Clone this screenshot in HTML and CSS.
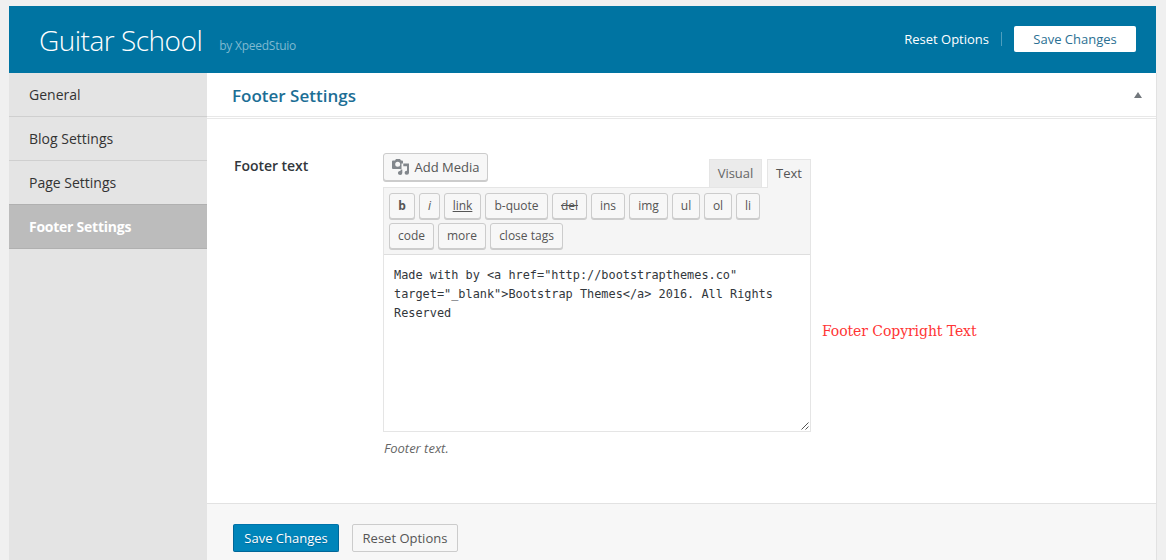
FILE: index.html
```html
<!DOCTYPE html>
<html lang="en">
<head>
<meta charset="utf-8">
<title>Guitar School</title>
<link rel="stylesheet" href="styles.css">
</head>
<body>
<div class="panel">
  <header class="header">
    <h1 class="title">Guitar School</h1>
    <span class="author">by XpeedStuio</span>
    <a class="header-reset">Reset Options</a>
    <button class="header-save">Save Changes</button>
  </header>
  <div class="body">
    <nav class="sidebar">
      <a class="item">General</a>
      <a class="item">Blog Settings</a>
      <a class="item">Page Settings</a>
      <a class="item active">Footer Settings</a>
    </nav>
    <main class="main">
      <div class="section-head">
        <h2 class="section-title">Footer Settings</h2>
        <svg class="caret" width="8" height="6" viewBox="0 0 8 6"><path d="M4 0 8 6H0z" fill="#72777c"/></svg>
      </div>
      <div class="section">
        <label class="label">Footer text</label>
        <div class="field">
          <div class="tools">
            <button class="media">
              <svg class="media-icon" width="17" height="17" viewBox="0 0 17 17" fill="#82878c">
                <path fill-rule="evenodd" d="M1 1.500h2L4 0h4l1 1.500h1q1 0 1 1V4.500H9.500V10H1q-1 0-1-1V2.500q0-1 1-1zM5.700 2.800a2.500 2.500 0 1 0 0 5A2.500 2.500 0 0 0 5.700 2.800z"/>
                <path d="M11.300 4.500H17v9.300a2.200 2 0 1 1-2-2V7.300h-3.700z"/>
                <path d="M8.500 10.500h1.800v3.500a2.200 2 0 1 1-1.800-2z"/>
              </svg>
              <span>Add Media</span>
            </button>
            <div class="tabs">
              <a class="tab visual">Visual</a>
              <a class="tab text">Text</a>
            </div>
          </div>
          <div class="editor">
            <div class="quicktags">
              <div class="row">
                <button class="qt w-b">b</button>
                <button class="qt w-i">i</button>
                <button class="qt w-link">link</button>
                <button class="qt w-quote">b-quote</button>
                <button class="qt w-del">del</button>
                <button class="qt w-ins">ins</button>
                <button class="qt w-img">img</button>
                <button class="qt w-ul">ul</button>
                <button class="qt w-ul">ol</button>
                <button class="qt w-li">li</button>
              </div>
              <div class="row">
                <button class="qt w-code">code</button>
                <button class="qt w-more">more</button>
                <button class="qt w-close">close tags</button>
              </div>
            </div>
            <div class="code">Made with by &lt;a href="http://bootstrapthemes.co"<br>target="_blank"&gt;Bootstrap Themes&lt;/a&gt; 2016. All Rights<br>Reserved</div>
            <svg class="grip" width="8" height="8" viewBox="0 0 8 8" stroke="#555" fill="none"><path d="M0.500 7.500 7.500 0.500M4.500 7.500 7.500 4.500"/></svg>
          </div>
          <p class="hint">Footer text.</p>
        </div>
        <div class="note">Footer Copyright Text</div>
      </div>
      <footer class="footer">
        <button class="btn primary">Save Changes</button>
        <button class="btn">Reset Options</button>
      </footer>
    </main>
  </div>
</div>
</body>
</html>
```
FILE: styles.css
```css
* { box-sizing: border-box; }
body {
  margin: 0;
  height: 560px;
  overflow: hidden;
  background: #f0f0f0;
  font-family: "Open Sans", sans-serif;
  font-size: 13px;
  color: #444;
}
h1, h2, p { margin: 0; }
button { font: inherit; padding: 0; margin: 0; white-space: nowrap; }
.panel {
  display: flex;
  flex-direction: column;
  width: 1148px;
  height: 554px;
  margin: 6px 0 0 9px;
}
.header {
  display: flex;
  width: 1147px;
  height: 67px;
  padding: 0 20px 0 30px;
  background: #0074a2;
  color: #fff;
}
.title { font-size: 28px; font-weight: 300; line-height: 69px; letter-spacing: -0.5px; }
.author { margin-left: 17px; font-size: 12px; line-height: 79px; letter-spacing: -0.25px; color: #7fb9d0; }
.header-reset {
  height: 14px;
  margin: 26px 12px 0 auto;
  padding-right: 12px;
  border-right: 1px solid #4d9ebe;
  line-height: 15px;
}
.header-save {
  width: 122px;
  height: 26px;
  margin-top: 20px;
  border: 0;
  border-radius: 2px;
  background: #fff;
  color: #2b7093;
  line-height: 26px;
}
.body {
  display: flex;
  flex: 1;
  border-right: 1px solid #e2e2e2;
  background: #fff;
}
.sidebar { width: 198px; background: #e4e4e4; }
.item {
  display: block;
  height: 44px;
  padding-left: 20px;
  border-bottom: 1px solid #cfcfcf;
  font-size: 14px;
  line-height: 44px;
  color: #333;
}
.item:nth-child(3) { height: 43px; border-bottom: 0; }
.active {
  height: 45px;
  border-top: 1px solid #b0b0b0;
  border-bottom-color: #b0b0b0;
  background: #bcbcbc;
  color: #fff;
  font-weight: 700;
  letter-spacing: -0.25px;
}
.main { display: flex; flex: 1; flex-direction: column; }
.section-head {
  display: flex;
  align-items: center;
  justify-content: space-between;
  height: 46px;
  padding: 0 14px 0 25px;
  border-bottom: 3px double #e8e8e8;
}
.section-title { padding-top: 2px; font-size: 17px; font-weight: 600; color: #1c6e95; }
.caret { margin-top: 0; }
.section { display: flex; height: 384px; padding: 34px 0 0 27px; }
.label { width: 149px; font-size: 14px; font-weight: 600; line-height: 26px; letter-spacing: -0.05px; color: #32373c; }
.field { width: 428px; }
.tools { display: flex; justify-content: space-between; height: 34px; }
.media, .qt, .btn { border: 1px solid #ccc; border-radius: 3px; background: #f7f7f7; color: #555; }
.media {
  display: flex;
  align-items: center;
  width: 105px;
  height: 28px;
  padding-left: 8px;
  box-shadow: 0 1px 0 #ccc;
}
.media-icon { margin-right: 5.500px; }
.tabs { display: flex; gap: 5px; padding-top: 6px; }
.tab {
  border: 1px solid #e5e5e5;
  border-bottom: 0;
  background: #ebebeb;
  font-size: 13px;
  line-height: 27px;
  text-align: center;
  color: #666;
}
.visual { width: 53px; height: 28px; }
.text { position: relative; z-index: 1; width: 44px; height: 29px; background: #f5f5f5; color: #555; }
.editor { position: relative; height: 245px; border: 1px solid #e5e5e5; }
.quicktags {
  display: flex;
  flex-direction: column;
  gap: 4px;
  height: 67px;
  padding: 5px;
  border-bottom: 1px solid #dedede;
  background: #f5f5f5;
}
.row { display: flex; gap: 4px; }
.qt { height: 26px; box-shadow: 0 1px 0 #ccc; font-size: 12px; line-height: 24px; }
.w-b { width: 26px; font-weight: 700; }
.w-i { width: 21px; font-style: italic; }
.w-link { width: 37px; text-decoration: underline; }
.w-quote { width: 63px; }
.w-del { width: 35px; text-decoration: line-through; }
.w-ins { width: 34px; }
.w-img { width: 39px; }
.w-ul { width: 28px; }
.w-li { width: 24px; }
.w-code { width: 45px; }
.w-more { width: 48px; }
.w-close { width: 73px; }
.code {
  padding: 11px 10px;
  font: 11.880px/19px "DejaVu Sans Mono", monospace;
  white-space: nowrap;
  color: #32373c;
}
.grip { position: absolute; right: 1px; bottom: 1px; }
.hint { padding-left: 1px; font-style: italic; line-height: 32px; color: #666; }
.note {
  margin: 168px 0 0 11px;
  font: 14px/20px "Roboto Slab", "DejaVu Serif", serif;
  letter-spacing: -0.08px;
  white-space: nowrap;
  color: #ff3434;
}
.footer {
  display: flex;
  flex: 1;
  gap: 13px;
  padding: 20px 26px 0;
  border-top: 1px solid #e2e2e2;
  background: #f7f7f7;
}
.btn { width: 106px; height: 28px; border-radius: 2px; line-height: 26px; }
.primary { border-color: #0073aa #006799 #006799; background: #0085ba; color: #fff; text-shadow: 0 1px 1px #006799; }
```
